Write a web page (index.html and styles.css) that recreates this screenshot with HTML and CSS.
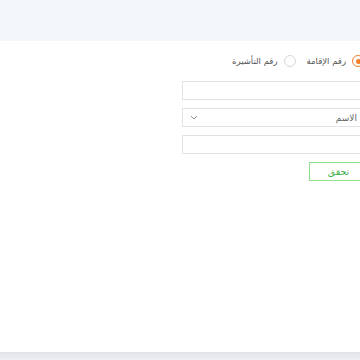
FILE: index.html
```html
<!DOCTYPE html>
<html lang="ar">
<head>
<meta charset="UTF-8">
<meta name="viewport" content="width=device-width, initial-scale=1.0">
<title>التحقق</title>
<link rel="stylesheet" href="styles.css">
</head>
<body>
<div class="top-band"></div>
<div class="card">
  <form class="check-form" dir="rtl">
    <div class="radio-row">
      <label class="radio-option">
        <span class="radio checked"></span>
        <span class="radio-text">رقم الإقامة</span>
      </label>
      <label class="radio-option">
        <span class="radio"></span>
        <span class="radio-text">رقم التأشيرة</span>
      </label>
    </div>
    <div class="field"></div>
    <div class="field select-field">
      <span class="select-text">الاسم</span>
      <svg class="chevron" width="8" height="5" viewBox="0 0 8 5"><path d="M1 1l3 3 3-3" fill="none" stroke="#8a8f96" stroke-width="1"/></svg>
    </div>
    <div class="field"></div>
    <div class="actions">
      <button type="button" class="verify-btn">تحقق</button>
    </div>
  </form>
</div>
<div class="bottom-bar"></div>
</body>
</html>
```

FILE: styles.css
```css
body {
  margin: 0;
  font-family: "DejaVu Sans", sans-serif;
  background: #fff;
  overflow: hidden;
}

.top-band {
  height: 41px;
  background: #f3f6fa;
}

.card {
  height: 311px;
  background: #fff;
}

.bottom-bar {
  height: 8px;
  background: linear-gradient(#dfe2e7, #eef0f3);
}

.check-form {
  margin-left: 182px;
  width: 186px;
  padding-top: 13px;
  display: flex;
  flex-direction: column;
  gap: 8px;
}

.radio-row {
  display: flex;
  gap: 11px;
  height: 14px;
  align-items: center;
  margin-bottom: 5px;
  padding-right: 4px;
}

.radio-option {
  display: flex;
  align-items: center;
  gap: 6px;
  font-size: 8.5px;
  color: #555;
}

.radio {
  width: 10px;
  height: 10px;
  border: 1px solid #d4d7db;
  border-radius: 50%;
  box-sizing: content-box;
  position: relative;
}

.radio.checked {
  border-color: #f47f2b;
}

.radio.checked::after {
  content: "";
  position: absolute;
  left: 2.5px;
  top: 2.5px;
  width: 5px;
  height: 5px;
  border-radius: 50%;
  background: #f47f2b;
}

.field {
  height: 19px;
  border: 1px solid #e1e3e6;
  box-sizing: border-box;
  background: #fff;
}

.select-field {
  display: flex;
  align-items: center;
  justify-content: space-between;
  padding: 0 10px 0 7px;
}

.select-text {
  font-size: 9px;
  color: #666;
}

.actions {
  display: flex;
  justify-content: flex-start;
}

.verify-btn {
  width: 59px;
  height: 19px;
  border: 1px solid #8fe08a;
  background: #fff;
  color: #3cb043;
  font-family: "DejaVu Sans", sans-serif;
  font-size: 9.5px;
  padding: 0;
}
```
